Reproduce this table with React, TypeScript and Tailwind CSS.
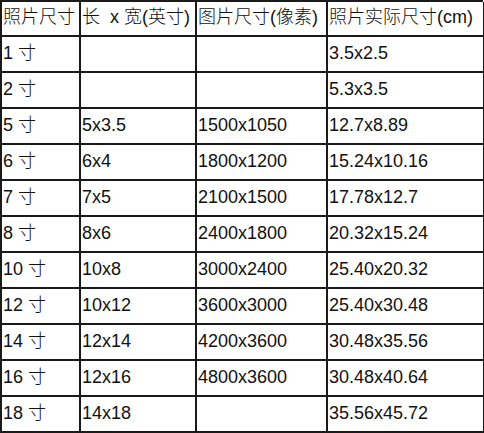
import React from "react";

const rows: string[][] = [
  ["照片尺寸", "长\u00a0 x 宽(英寸)", "图片尺寸(像素)", "照片实际尺寸(cm)"],
  ["1 寸", "", "", "3.5x2.5"],
  ["2 寸", "", "", "5.3x3.5"],
  ["5 寸", "5x3.5", "1500x1050", "12.7x8.89"],
  ["6 寸", "6x4", "1800x1200", "15.24x10.16"],
  ["7 寸", "7x5", "2100x1500", "17.78x12.7"],
  ["8 寸", "8x6", "2400x1800", "20.32x15.24"],
  ["10 寸", "10x8", "3000x2400", "25.40x20.32"],
  ["12 寸", "10x12", "3600x3000", "25.40x30.48"],
  ["14 寸", "12x14", "4200x3600", "30.48x35.56"],
  ["16 寸", "12x16", "4800x3600", "30.48x40.64"],
  ["18 寸", "14x18", "", "35.56x45.72"],
];

export default function App() {
  return (
    <div className="h-[433px] w-[484px] overflow-hidden bg-white">
      <div
        className="grid w-[483px] grid-cols-[79px_116px_131px_157px] border-l-2 border-t-2 border-[#1a1a1a] text-[18px] font-light text-[#111]"
        style={{ fontFamily: '"Liberation Sans", "Noto Sans CJK SC", sans-serif' }}
      >
        {rows.map((row, i) =>
          row.map((cell, j) => (
            <div
              key={`${i}-${j}`}
              className={`flex items-center overflow-hidden whitespace-nowrap border-b-2 border-r-2 border-[#1a1a1a] pb-[2px] pl-[1px] ${
                i === 0 ? "h-[35px]" : "h-[36px]"
              }`}
            >
              {cell}
            </div>
          ))
        )}
      </div>
    </div>
  );
}
